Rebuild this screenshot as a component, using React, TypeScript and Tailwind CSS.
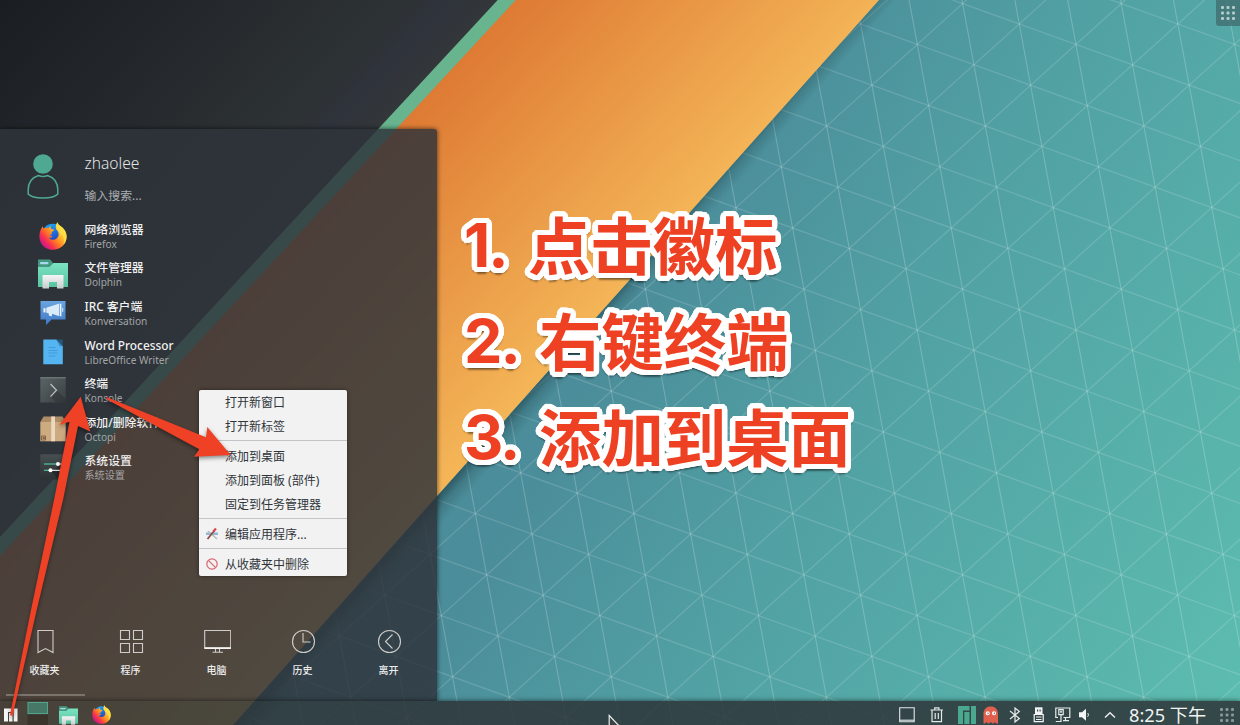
import type { CSSProperties, ReactNode } from 'react';

type Line = [number, number, number, number];

const AX = 56.64;
const AY = 20.4;
const BX = 11.31;
const BY = 61.2;
const OX = 917.3;
const OY = 44.4;

function meshLines(): { steep: Line[]; slanted: Line[] } {
  const steep: Line[] = [];
  const slanted: Line[] = [];
  const reach = 40;
  for (let i = -30; i <= 30; i++) {
    const ax = OX + i * AX;
    const ay = OY + i * AY;
    steep.push([ax - reach * BX, ay - reach * BY, ax + reach * BX, ay + reach * BY]);
    const bx = OX + i * BX;
    const by = OY + i * BY;
    slanted.push([bx - reach * AX, by - reach * AY, bx + reach * AX, by + reach * AY]);
    const dx = AX - BX;
    const dy = AY - BY;
    slanted.push([ax - reach * dx, ay - reach * dy, ax + reach * dx, ay + reach * dy]);
  }
  return { steep, slanted };
}

const mesh = meshLines();

function Wallpaper() {
  return (
    <svg className="absolute inset-0" width="1240" height="725" viewBox="0 0 1240 725">
      <defs>
        <linearGradient id="dark" gradientUnits="userSpaceOnUse" x1="0" y1="0" x2="268" y2="248">
          <stop offset="0" stopColor="#1a1e22" />
          <stop offset="0.5" stopColor="#262a2e" />
          <stop offset="0.8" stopColor="#2d3234" />
          <stop offset="0.9" stopColor="#2f333b" />
          <stop offset="1" stopColor="#33373a" />
        </linearGradient>
        <linearGradient id="orange" gradientUnits="userSpaceOnUse" x1="398" y1="127" x2="599" y2="314">
          <stop offset="0" stopColor="#de7a34" />
          <stop offset="1" stopColor="#f4b557" />
        </linearGradient>
        <linearGradient id="teal" gradientUnits="userSpaceOnUse" x1="601" y1="345" x2="1244" y2="714">
          <stop offset="0" stopColor="#4b8d9a" />
          <stop offset="0.33" stopColor="#51a0a3" />
          <stop offset="0.7" stopColor="#57b0aa" />
          <stop offset="1" stopColor="#5dbdb0" />
        </linearGradient>
        <linearGradient id="edge" gradientUnits="userSpaceOnUse" x1="556" y1="362" x2="571" y2="375">
          <stop offset="0" stopColor="#16323a" stopOpacity="0.5" />
          <stop offset="0.4" stopColor="#16323a" stopOpacity="0.2" />
          <stop offset="1" stopColor="#16323a" stopOpacity="0" />
        </linearGradient>
      </defs>
      <rect width="1240" height="725" fill="url(#teal)" />
      <g stroke="#ffffff" fill="none">
        {mesh.steep.map((l, i) => (
          <line key={i} x1={l[0]} y1={l[1]} x2={l[2]} y2={l[3]} strokeWidth="1.1" strokeOpacity="0.21" />
        ))}
        {mesh.slanted.map((l, i) => (
          <line key={i} x1={l[0]} y1={l[1]} x2={l[2]} y2={l[3]} strokeWidth="1.3" strokeOpacity="0.15" />
        ))}
      </g>
      <polygon points="879,0 233,725 300,725 946,0" fill="url(#edge)" />
      <polygon points="0,0 879,0 233,725 0,725" fill="url(#orange)" />
      <polygon points="0,0 515.7,0 0,556" fill="#67b48f" />
      <polygon points="0,0 497.7,0 0,537" fill="url(#dark)" />
    </svg>
  );
}

function Firefox({ size }: { size: number }) {
  return (
    <svg width={size} height={size} viewBox="0 0 28 28" className="shrink-0">
      <defs>
        <linearGradient id="ffBody" x1="0.85" y1="0.1" x2="0.12" y2="0.75">
          <stop offset="0" stopColor="#fff14f" />
          <stop offset="0.32" stopColor="#ffbe2e" />
          <stop offset="0.6" stopColor="#ff7a24" />
          <stop offset="0.82" stopColor="#f9344c" />
          <stop offset="1" stopColor="#d61b80" />
        </linearGradient>
        <linearGradient id="ffGlobe" x1="0.3" y1="0" x2="0.6" y2="1">
          <stop offset="0" stopColor="#1ea4f4" />
          <stop offset="0.5" stopColor="#1f66d8" />
          <stop offset="1" stopColor="#3a2393" />
        </linearGradient>
      </defs>
      <circle cx="14" cy="13" r="11.3" fill="url(#ffGlobe)" />
      <path
        d="M3.6 4.2c.3 1 .6 1.700 1.100 2.300C6.400 5.700 8 5.700 9.400 6.300 10 5 11 4.200 12 3.800c-.5 1-.6 2 .1 3 .7.6 2 .6 3.200.8-.2 1.300-1.600 2-2.600 2.600-.2 1 .2 1.700 0 2.500-.9-.4-2-.3-2.700.3 1.400.2 2.200 1.300 3.700 1.400-1 1-2.500 1.400-3.900 1.100 1.200 2 3.300 2.700 5.300 2.200 2.900-.7 4.700-3 4.500-5.700-.1-2-1-3.200-2.300-4.500C16.200 5.600 16.700 2.400 18.400.3c.5 2 1.700 3 3.600 4.200 3 2.200 5.600 5.400 5.600 10.100C27.600 22 21.500 27.800 14 27.800 6.300 27.800.4 22 .4 14.400.4 10.500 1.600 7 3.600 4.200Z"
        fill="url(#ffBody)"
      />
      <path d="M18.400.3c.5 2 1.700 3 3.600 4.200 3 2.200 5.600 5.400 5.600 10.100 0 3.400-1.200 6.300-3.200 8.600 1.500-5.600.2-9.400-3.100-12.300C17.300 7.200 16.900 3 18.400.3Z" fill="#ffe14a" fillOpacity=".75" />
    </svg>
  );
}

function Folder({ size }: { size: number }) {
  return (
    <svg width={size} height={size} viewBox="0 0 30 30" className="shrink-0">
      <defs>
        <linearGradient id="fold" x1="0" y1="0" x2="0" y2="1">
          <stop offset="0" stopColor="#7be3c2" />
          <stop offset="1" stopColor="#59c3a0" />
        </linearGradient>
        <linearGradient id="foldFront" x1="0" y1="0" x2="0" y2="1">
          <stop offset="0" stopColor="#f4f5f5" />
          <stop offset="1" stopColor="#c9cccd" />
        </linearGradient>
      </defs>
      <path d="M0 0.500h12l3 3.500v5H0z" fill="#45997f" />
      <rect x="2" y="3" width="8.500" height="2.200" rx="1" fill="#a8d9ee" />
      <path d="M0 8h11.500l4-4H30v24H0z" fill="url(#fold)" />
      <path d="M4.500 16h21v13.500h-6.500v-6.500h-8v6.500H4.500z" fill="url(#foldFront)" />
    </svg>
  );
}

function Megaphone() {
  return (
    <svg width="26" height="26" viewBox="0 0 26 26">
      <defs>
        <linearGradient id="irc" x1="0" y1="0" x2="0" y2="1">
          <stop offset="0" stopColor="#6aa5e0" />
          <stop offset="1" stopColor="#3f79c6" />
        </linearGradient>
      </defs>
      <path d="M0.500 1h25v18.500h-14L6 25v-5.500H.5z" fill="url(#irc)" />
      <path d="M6.300 7.700L19.300 3.500v12.800L12 13.800v2.500l-3-.5-.4-2.500-2.300-.5z" fill="#dcebf8" />
      <path d="M3.500 8.200h2v4.200h-2z" fill="#eef6fd" />
      <path d="M20 4l1.400-.5v13L20 16z" fill="#eef6fd" />
      <path d="M22.200 8h1v3.800h-1z" fill="#dcebf8" />
    </svg>
  );
}

function WriterDoc() {
  return (
    <svg width="26" height="26" viewBox="0 0 26 26">
      <path d="M3.300 .5h13l6.500 6.700v18H3.300z" fill="#54b5f1" />
      <path d="M16.300 .5l6.500 6.700v-6.700z" fill="#24557a" />
      <path d="M16.300 .5l6.500 6.700h-3z" fill="#3b86bd" />
      <path d="M8.500 8.500h7M8.500 11.500h9M8.500 14h9M8.500 17h7" stroke="#4399da" strokeWidth="1" />
    </svg>
  );
}

function Konsole() {
  return (
    <svg width="26" height="26" viewBox="0 0 26 26">
      <defs>
        <linearGradient id="kon" x1="0" y1="0" x2="1" y2="1">
          <stop offset="0" stopColor="#5a6466" />
          <stop offset="1" stopColor="#3a3f41" />
        </linearGradient>
      </defs>
      <rect x=".3" y=".3" width="25.400" height="25.200" fill="url(#kon)" />
      <path d="M11 20l6-6.500 8.700 8.500v3.500H16z" fill="#272b2d" fillOpacity=".4" />
      <path d="M.3 .8h25.400" stroke="#7b8384" />
      <path d="M10.500 7l6 6.300-6 6.300" stroke="#b9bdbd" strokeWidth="1.300" fill="none" />
    </svg>
  );
}

function Box() {
  return (
    <svg width="26" height="26" viewBox="0 0 26 26">
      <path d="M3.500 .5h19l3.200 5.500H.3z" fill="#ad8c66" />
      <rect x=".3" y="6" width="25.400" height="19.300" fill="#cdaa80" />
      <rect x="11.200" y=".5" width="3.800" height="24.800" fill="#ead9bf" />
      <path d="M1.500 20h4v4h-4zM3 21.500h1.500v1H3z" stroke="#6e5335" strokeWidth=".8" fill="none" />
    </svg>
  );
}

function Sliders() {
  return (
    <svg width="26" height="26" viewBox="0 0 26 26">
      <defs>
        <linearGradient id="sli" x1="0" y1="0" x2="0" y2="1">
          <stop offset="0" stopColor="#474f51" />
          <stop offset="1" stopColor="#2c3133" />
        </linearGradient>
      </defs>
      <rect x=".3" y=".3" width="25.400" height="25.200" fill="url(#sli)" />
      <path d="M12 18l8-7 5.700 5v9.500h-7z" fill="#191c1e" fillOpacity=".55" />
      <path d="M4 10h13" stroke="#4fc3a1" strokeWidth="1.200" />
      <path d="M17 10h6M10 16.300h12" stroke="#dfe3e3" strokeWidth="1.200" />
      <path d="M4 16.300h6" stroke="#4fc3a1" strokeWidth="1.200" />
      <circle cx="18" cy="10" r="2" fill="#fff" />
      <circle cx="10.500" cy="16.300" r="2" fill="#fff" />
    </svg>
  );
}

const favourites: { title: string; sub: string; icon: ReactNode }[] = [
  { title: '网络浏览器', sub: 'Firefox', icon: <Firefox size={28} /> },
  { title: '文件管理器', sub: 'Dolphin', icon: <Folder size={30} /> },
  { title: 'IRC 客户端', sub: 'Konversation', icon: <Megaphone /> },
  { title: 'Word Processor', sub: 'LibreOffice Writer', icon: <WriterDoc /> },
  { title: '终端', sub: 'Konsole', icon: <Konsole /> },
  { title: '添加/删除软件', sub: 'Octopi', icon: <Box /> },
  { title: '系统设置', sub: '系统设置', icon: <Sliders /> },
];

const tabs: { label: string; icon: ReactNode }[] = [
  { label: '收藏夹', icon: <path d="M6 2.500h15v22l-7.500-4-7.500 4z" /> },
  {
    label: '程序',
    icon: <path d="M2.500 2.500h9v9h-9zM15.500 2.500h9v9h-9zM2.500 15.500h9v9h-9zM15.500 15.500h9v9h-9z" />,
  },
  {
    label: '电脑',
    icon: (
      <>
        <path d="M.7 2.500h26v18H.7z" />
        <path d="M.7 20h26" strokeWidth="1.600" stroke="#fff" />
        <path d="M11.500 21v3M15.500 21v3M8.500 24.300h10.500" />
      </>
    ),
  },
  {
    label: '历史',
    icon: (
      <>
        <circle cx="13.500" cy="13.500" r="11" />
        <path d="M13 5v9h7.500" />
      </>
    ),
  },
  {
    label: '离开',
    icon: (
      <>
        <circle cx="13.500" cy="13.500" r="11" />
        <path d="M16.500 6.500l-7 7 7 7" />
      </>
    ),
  },
];

function Launcher() {
  return (
    <section className="flex h-[572px] w-[437px] flex-col rounded-tr-[3px] bg-[#2f333b]/[.835] shadow-[0_0_5px_rgba(0,0,0,.65)]">
      <header className="flex h-[83px] shrink-0">
        <svg width="34" height="48" viewBox="0 0 34 48" className="ml-[26px] mt-[24px]">
          <circle cx="17" cy="11" r="9.800" fill="#4fa992" />
          <path
            d="M12.500 22.500c2.800 1.200 6.200 1.200 9 0 6.500 2 10.300 7.500 10.300 14.500v4C27.500 46.300 6.500 46.300 2.200 41v-4c0-7 3.800-12.500 10.300-14.500z"
            fill="none"
            stroke="#4fa992"
            strokeWidth="1.500"
          />
        </svg>
        <div className="ml-[24.500px] flex flex-col">
          <span className="mt-[22px] h-6 text-[15.600px] font-light leading-6 text-[#e0e2e3]">zhaolee</span>
          <span className="mt-[11px] h-[18px] text-[11.900px] leading-[18px] text-[#a9adb0]">输入搜索...</span>
        </div>
      </header>
      <ul className="flex flex-col pt-[4.500px]">
        {favourites.map((f) => (
          <li key={f.sub} className="flex h-[38.600px] items-center">
            <div className="ml-[33px] flex w-10 justify-center">{f.icon}</div>
            <div className="ml-[11.500px] flex flex-col">
              <span className="h-[16px] whitespace-nowrap text-[11.850px] font-medium leading-[16px] text-[#f0f1f1]">{f.title}</span>
              <span className="h-[14px] whitespace-nowrap text-[10.150px] leading-[14px] text-[#a3a5a6]">{f.sub}</span>
            </div>
          </li>
        ))}
      </ul>
      <nav className="mt-auto flex pl-[2px]">
        {tabs.map((t) => (
          <div key={t.label} className="flex w-[86px] flex-col items-center">
            <svg width="27" height="27" viewBox="0 0 27 27" fill="none" stroke="#cfcdca" strokeWidth="1.100">
              {t.icon}
            </svg>
            <span className="mr-[1px] mt-[6.500px] h-4 text-[10px] font-medium leading-4 text-[#ececec]">{t.label}</span>
          </div>
        ))}
      </nav>
      <div className="mb-[5px] ml-[6px] mt-[16.500px] h-[2px] w-[79px] bg-[#7b756e]" />
    </section>
  );
}

function MenuItem({ children, icon }: { children: ReactNode; icon?: ReactNode }) {
  return (
    <div className="flex h-6 items-center pl-[6px]">
      <span className="flex w-[14px] justify-center">{icon}</span>
      <span className="ml-[6px] whitespace-nowrap pt-[1px] text-[12px] leading-[25px] text-[#30353a]">{children}</span>
    </div>
  );
}

function MenuLine() {
  return <div className="mb-[3px] mt-[2px] h-px bg-[#c3c5c6]" />;
}

function ContextMenu() {
  return (
    <div className="absolute left-[199px] top-[390px] h-[186px] w-[148px] rounded-[2px] bg-[#f2f2f2] shadow-[0_0_4px_rgba(0,0,0,.45)]">
      <MenuItem>打开新窗口</MenuItem>
      <MenuItem>打开新标签</MenuItem>
      <MenuLine />
      <MenuItem>添加到桌面</MenuItem>
      <MenuItem>添加到面板 (部件)</MenuItem>
      <MenuItem>固定到任务管理器</MenuItem>
      <MenuLine />
      <MenuItem
        icon={
          <svg width="14" height="14" viewBox="0 0 14 14">
            <path d="M1 5.500h12v2.500H1z" fill="#8fb8d8" />
            <path d="M3 4l9 8" stroke="#b9bcbf" strokeWidth="1.500" />
            <path d="M2.500 12L9.500 3.500" stroke="#8d4c48" strokeWidth="1.800" />
            <path d="M8.300 4.500l2.700-3" stroke="#da4453" strokeWidth="2.200" />
          </svg>
        }
      >
        编辑应用程序...
      </MenuItem>
      <MenuLine />
      <MenuItem
        icon={
          <svg width="14" height="14" viewBox="0 0 14 14" fill="none" stroke="#da6470" strokeWidth="1.200">
            <circle cx="7" cy="7" r="5.200" />
            <path d="M3.400 3.400l7.200 7.200" />
          </svg>
        }
      >
        从收藏夹中删除
      </MenuItem>
    </div>
  );
}

const OUTLINE = 5.4;
const ring = Array.from({ length: 36 }, (_, i) => {
  const t = (i * Math.PI) / 18;
  return `${(OUTLINE * Math.cos(t)).toFixed(2)}px ${(OUTLINE * Math.sin(t)).toFixed(2)}px 0 #fff`;
});
const innerRing = Array.from({ length: 16 }, (_, i) => {
  const t = (i * Math.PI) / 8;
  return `${(3 * Math.cos(t)).toFixed(2)}px ${(3 * Math.sin(t)).toFixed(2)}px 0 #fff`;
});
const outlineStyle: CSSProperties = {
  textShadow: [...ring, ...innerRing, '0 7px 2px rgba(0,0,0,.4)', '4px 5px 2px rgba(0,0,0,.3)', '-4px 5px 2px rgba(0,0,0,.3)'].join(','),
};

const steps: { mark: string; text: string; row: string; gap: string }[] = [
  { mark: '1.', text: '点击徽标', row: 'flex h-[95px] items-center whitespace-nowrap', gap: 'w-[64px] pt-[4px]' },
  { mark: '2.', text: '右键终端', row: 'flex h-[96px] items-center whitespace-nowrap', gap: 'w-[75px] pt-[4px]' },
  { mark: '3.', text: '添加到桌面', row: 'flex h-[96px] items-center whitespace-nowrap', gap: 'w-[75px] pt-[4px]' },
];

function Steps() {
  return (
    <div className="absolute left-[464px] top-[196px] flex flex-col text-[#ee4023]" style={outlineStyle}>
      {steps.map((s) => (
        <div key={s.mark} className={s.row}>
          <span className={s.gap}>
            <span className="font-['Inter'] text-[61px] font-bold leading-none tracking-[-2px]">{s.mark}</span>
          </span>
          <span className="font-['Noto_Sans_CJK_SC'] text-[62.400px] font-bold leading-none">{s.text}</span>
        </div>
      ))}
    </div>
  );
}

function Arrows() {
  return (
    <svg className="absolute left-0 top-[380px] drop-shadow-[0_2px_2px_rgba(0,0,0,.45)]" width="250" height="345" viewBox="0 380 250 345">
      <path d="M80.700 396.700L90.300 431.500L78 426L63 500L36.700 610L12.500 716L10 715L31 610L54 500L69.500 421.800L59.300 425z" fill="#ee4126" />
      <path d="M106.500 397L206 437.300L207.300 427L230.700 455L194 456.700L199.300 449.300L107 399.500z" fill="#ee4126" />
    </svg>
  );
}

function Dots({ size, color }: { size: number; color: string }) {
  return (
    <svg width={size} height={size} viewBox="0 0 14 14" fill={color}>
      {[0, 5.500, 11].map((y) => [0, 5.500, 11].map((x) => <rect key={`${x}-${y}`} x={x} y={y} width="3" height="3" rx="1" />))}
    </svg>
  );
}

function Taskbar() {
  return (
    <footer className="flex h-6 shrink-0 items-start bg-[#2d3438]/[.86] shadow-[0_0_5px_rgba(0,0,0,.6)]">
      <svg width="14" height="14" viewBox="0 0 14 14" className="ml-[4px] mt-[7px]">
        <path d="M0 .5h8.500v3.500H4v9.500H0zM5 5h3.500v8.500H5zM9.700 .5H13.500v13H9.700z" fill="#f6f6f6" />
      </svg>
      <svg width="22" height="24" viewBox="0 0 22 24" className="ml-[9px]">
        <rect x="1" y="1.500" width="19.500" height="11" fill="#477766" stroke="#50a58d" />
        <path d="M.5 13.500h20.500v11H.5z" fill="#3b342d" />
      </svg>
      <div className="ml-[10px] mt-[5px] h-[19px] overflow-hidden">
        <Folder size={19} />
      </div>
      <div className="ml-[14px] mt-[4px]">
        <Firefox size={19} />
      </div>
      <svg width="16" height="16" viewBox="0 0 16 16" className="ml-auto mt-[6px]" fill="none" stroke="#e4e8e8" strokeWidth="1.100">
        <path d="M.7 .7h14.500v14H.7z" />
        <path d="M1 13.200h14" />
      </svg>
      <svg width="14" height="16" viewBox="0 0 14 16" className="ml-[15px] mt-[6px]" fill="none" stroke="#e4e8e8" strokeWidth="1.200">
        <path d="M.5 3h12.500M4.700 2.800V.8h4.200v2M2 3v11.700h9.500V3M5.200 6v6M8.300 6v6" />
      </svg>
      <svg width="18" height="18" viewBox="0 0 18 18" className="ml-[14px] mt-[5px]">
        <path d="M0 0h11.500v4.500H5V18H0zM6.300 6h5.200v12H6.300zM13 0h5v18h-5z" fill="#4aa88f" />
      </svg>
      <svg width="16" height="18" viewBox="0 0 16 18" className="ml-[7px] mt-[5px]">
        <path d="M.5 8C.5 3 3.600 .5 7.800 .5S15 3 15 8v9.500h-2l-1-1.500-1.500 1.500H9.200L7.800 16l-1.500 1.500H5L3.500 16l-1.200 1.500H.5z" fill="#e0604f" />
        <circle cx="4.700" cy="7.300" r="2" fill="#fff" />
        <circle cx="11" cy="7.300" r="2" fill="#fff" />
        <circle cx="5" cy="7.300" r=".7" fill="#8a4a44" />
        <circle cx="11.300" cy="7.300" r=".7" fill="#8a4a44" />
      </svg>
      <svg width="12" height="16" viewBox="0 0 12 16" className="ml-[10px] mt-[6px]" fill="none" stroke="#e9ecec" strokeWidth="1.200">
        <path d="M1 4l9.300 7.500L6 15V1l4.300 3.500L1 12" />
      </svg>
      <svg width="12" height="16" viewBox="0 0 12 16" className="ml-[12px] mt-[6px]">
        <path d="M2 .3h7.500V7H2z" fill="#f4f6f6" />
        <path d="M4 2.500h1.200v2H4zM6.500 2.500h1.200v2H6.500z" fill="#39474b" />
        <path d="M1.200 7.500h9v7.200h-9z" fill="none" stroke="#f4f6f6" strokeWidth="1.200" />
        <path d="M3 10h5.500M3 12.500h5.500" stroke="#f4f6f6" strokeWidth="1" />
      </svg>
      <svg width="16" height="16" viewBox="0 0 16 16" className="ml-[10px] mt-[6px]" fill="none" stroke="#e9ecec" strokeWidth="1.200">
        <path d="M3 10.500H.8V1h14v9.500H8.500M8 13.700h6M10.500 10.500v3" />
        <path d="M3.800 2.600h4.400v5H3.800zM6 8v4.500M6 12.500v2H.8" />
        <path d="M5.500 4h1v1.500h-1z" strokeWidth=".8" />
      </svg>
      <svg width="13" height="14" viewBox="0 0 13 14" className="ml-[7px] mt-[7px]">
        <path d="M1 4.300h3L8 .8v12L4 9.300H1z" fill="#f4f6f6" />
        <path d="M9.600 5c1 1 1 2.700 0 3.700" stroke="#f4f6f6" fill="none" />
      </svg>
      <svg width="12" height="8" viewBox="0 0 12 8" className="ml-[13px] mt-[10px]" fill="none" stroke="#e9ecec" strokeWidth="1.500">
        <path d="M1 6.500L6 1.700l5 4.800" />
      </svg>
      <span className="ml-[13px] mt-[5px] w-[79px] whitespace-nowrap text-[18.200px] leading-[19px] text-[#f1f3f3]">8:25 下午</span>
      <div className="ml-[12px] mr-[6px] mt-[7px]">
        <Dots size={14} color="#8a9698" />
      </div>
    </footer>
  );
}

export default function App() {
  return (
    <main className="relative h-[725px] w-[1240px] overflow-hidden font-['Noto_Sans','Noto_Sans_CJK_SC',sans-serif]">
      <Wallpaper />
      <div className="relative flex h-full flex-col">
        <div className="flex flex-1 items-end overflow-hidden">
          <Launcher />
        </div>
        <Taskbar />
      </div>
      <div className="absolute right-0 top-0 flex h-[26px] w-6 items-center justify-center rounded-bl-[3px] bg-[#3f6b6c]/[.75]">
        <Dots size={14} color="#b5cccb" />
      </div>
      <ContextMenu />
      <Steps />
      <Arrows />
      <svg className="absolute left-[607.500px] top-[713.500px]" width="15" height="12" viewBox="0 0 15 12">
        <path d="M1.200 1.500L14 15H1.200z" fill="#3c4144" stroke="#e8eaea" strokeWidth="1.200" />
      </svg>
    </main>
  );
}
